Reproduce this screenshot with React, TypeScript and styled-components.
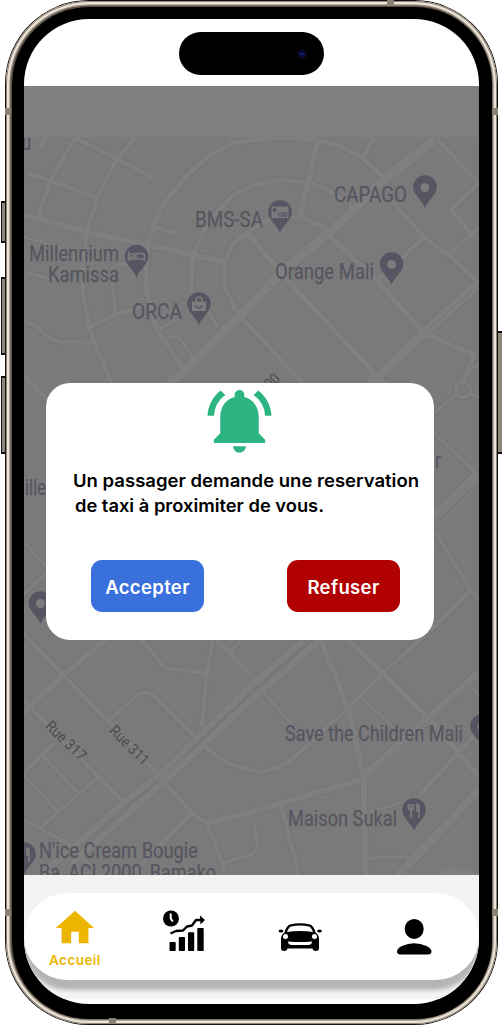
import React from "react";
import styled, { createGlobalStyle } from "styled-components";
import { MdNotificationsActive, MdHome } from "react-icons/md";

const Global = createGlobalStyle`
  html, body { margin: 0; background: #fff; }
  * { box-sizing: border-box; }
`;

const Stage = styled.div`
  position: relative;
  width: 502px;
  height: 1025px;
  padding: 0 4px 0 5px;
  overflow: hidden;
`;

const Phone = styled.div`
  position: relative;
  height: 1025px;
  padding: 1px;
  border-radius: 84px;
  background: #15130f;
`;

const Metal = styled.div`
  height: 100%;
  padding: 5.5px;
  border-radius: 83px;
  background: #b4aa9b;
  box-shadow: inset 0 0 0 1px #8b8375, inset 0 0 0 3.2px #ece4d8, inset 0 0 0 4.4px #a1978a, inset 0 0 0 6px #5a5144;
`;

const Bezel = styled.div`
  height: 100%;
  padding: 12.5px 12.5px 14px;
  border-radius: 77px;
  background: #000;
`;

const Screen = styled.div`
  height: 985px;
  border-radius: 65px;
  overflow: hidden;
  background: #fff;
  display: flex;
  flex-direction: column;
`;

const SideButton = styled.div<{ $top: number; $height: number; $right?: boolean }>`
  position: absolute;
  top: ${(p) => p.$top}px;
  height: ${(p) => p.$height}px;
  width: 5px;
  ${(p) => (p.$right ? "right: 0;" : "left: 1px;")}
  background: #8f8779;
  border: solid #111;
  border-width: ${(p) => (p.$right ? "2px 0 2px 0" : "2px 0 2px 1px")};
`;

const Antenna = styled.div<{ $x: number; $y: number; $w: number; $h: number }>`
  position: absolute;
  left: ${(p) => p.$x}px;
  top: ${(p) => p.$y}px;
  width: ${(p) => p.$w}px;
  height: ${(p) => p.$h}px;
  background: #8a8272;
`;

const StatusBar = styled.header`
  height: 67px;
  padding-top: 13px;
  flex: none;
  display: flex;
  justify-content: center;
`;

const Island = styled.div`
  width: 145px;
  height: 43px;
  border-radius: 22px;
  background: #000;
  display: flex;
  align-items: center;
  justify-content: flex-end;
  padding-right: 17px;
`;

const Camera = styled.div`
  width: 10px;
  height: 10px;
  border-radius: 3px;
  background: radial-gradient(circle at 35% 50%, #23277a 0 0.6px, transparent 1.3px),
    radial-gradient(circle at 65% 50%, #23277a 0 0.6px, transparent 1.3px),
    radial-gradient(circle, #0b0a3c 0 3px, #08060c 4px);
`;

const MapArea = styled.main`
  position: relative;
  height: 789px;
  flex: none;
  padding-top: 51px;
  background: #7f7f7f;
`;

const MapSvg = styled.svg`
  display: block;
  width: 455px;
  height: 738px;
  background: #7a7a7a;
`;

const Dialog = styled.section`
  position: absolute;
  left: 22px;
  top: 297px;
  width: 388px;
  height: 257px;
  border-radius: 24px;
  background: #fff;
  display: flex;
  flex-direction: column;
  align-items: center;
`;

const Bell = styled(MdNotificationsActive)`
  flex: none;
  margin: -1px 1px 1px 0;
  color: #2cb583;
`;

const Message = styled.svg`
  display: block;
  flex: none;
  width: 388px;
  height: 64px;
  font: 600 17.5px Inter, "Liberation Sans", sans-serif;
`;

const Actions = styled.div`
  display: flex;
  gap: 83px;
  margin-top: 36px;
  padding-left: 11px;
`;

const ActionButton = styled.button<{ $color: string }>`
  width: 113px;
  height: 52px;
  padding: 2px 0 0;
  border: 0;
  border-radius: 11px;
  background: ${(p) => p.$color};
  color: #fff;
  font: 600 18.5px Inter, "Liberation Sans", sans-serif;
  letter-spacing: 0.35px;
  white-space: nowrap;
`;

const BottomArea = styled.footer`
  height: 124px;
  flex: none;
  padding-top: 18px;
  background: #f3f3f3;
`;

const Nav = styled.nav`
  height: 87px;
  border-radius: 44px;
  background: #fff;
  box-shadow: 0 10px 4px rgba(0, 0, 0, 0.26);
  display: flex;
  padding-left: 25px;
`;

const NavItem = styled.div<{ $width: number; $top: number }>`
  width: ${(p) => p.$width}px;
  padding-top: ${(p) => p.$top}px;
  display: flex;
  flex-direction: column;
  align-items: flex-start;
  svg { display: block; }
`;

const HomeIcon = styled(MdHome)`
  margin-left: 3px;
  color: #ecb500;
`;

const NavLabel = styled.span`
  font: 600 13.5px/18px Inter, "Liberation Sans", sans-serif;
  color: #ecb500;
  letter-spacing: 0.45px;
`;

const roads: [string, number][] = [
  ["26,172 50,181 95,197", 5],
  ["75,138 62,160 50,181 38,217", 5],
  ["46,137 40,149", 5],
  ["75,138 117,159 153,178", 5],
  ["135,138 117,159 97,197 87,232 83,263 83,293 89,328 110,380 130,420", 5],
  ["24,215 87,232 148,245 193,255 225,262", 6],
  ["384,177 361,157 340,146 318,140 284,137 251,140 233,143 210,155 187,175 160,208 148,243 146,273 147,293 157,330 182,367", 5.5],
  ["155,227 175,233", 5],
  ["351,205 328,190 311,183 279,180 251,186 233,195 207,223 193,255 191,287 195,300", 5],
  ["318,140 308,183 300,215", 6],
  ["250,327 237,313 225,287 225,262 233,243 247,233 268,220 301,217 323,227 329,233", 5],
  ["434,140 384,180 329,233 284,270 240,315 182,373 130,420", 10],
  ["438,140 479,183 451,210 471,233", 5],
  ["449,255 479,227", 5],
  ["391,200 424,237 451,257 479,283", 5],
  ["424,237 378,280", 5],
  ["331,237 378,282 424,333 474,355 464,380", 6],
  ["247,233 289,282 378,377 394,390", 6],
  ["479,283 424,333 374,380 350,405", 10],
  ["244,320 284,363 305,385", 5],
  ["363,157 374,138", 5],
  ["233,143 229,137", 4],
  ["24,237 60,247", 3],
  ["27,273 57,280", 4],
  ["90,327 115,315 145,306", 5],
  ["115,315 112,267 133,262", 4],
  ["27,322 35,325 48,337 60,342 92,343", 5],
  ["157,330 183,317", 4],
  ["163,343 170,337 178,336 193,357", 4],
  ["207,310 218,328", 5],
  ["24,375 50,403", 5],
  ["24,542 50,570 24,594", 4],
  ["18,626 30,640 63,675 110,723 160,777 192,813 207,823 222,863 224,875", 5],
  ["463,383 471,370 479,363", 4],
  ["434,413 457,394", 4],
  ["469,393 479,398", 4],
  ["430,429 473,470 485,480", 4],
  ["434,517 479,473", 10],
  ["436,533 471,590 479,600", 5],
  ["471,590 434,627 383,673 348,708", 5],
  ["120,628 63,675 30,707 24,713", 6],
  ["24,700 30,707 124,803", 5],
  ["304,640 251,686 160,775 123,803 67,853 40,875", 7],
  ["320,640 251,700 166,780 72,863", 7],
  ["110,720 137,695 145,692 153,695 193,735", 5],
  ["138,636 165,668 207,673", 5],
  ["213,640 207,673 202,727", 5],
  ["217,640 251,675", 5],
  ["230,652 242,640", 4],
  ["205,747 227,763 251,770 264,772 288,763 348,708", 5],
  ["207,823 251,812 281,803 364,779", 6],
  ["24,773 55,742", 4],
  ["24,775 58,812", 4],
  ["42,755 78,793", 4],
  ["40,828 98,777", 4],
  ["24,820 67,843 100,875", 4],
  ["192,813 130,875", 5],
  ["222,863 251,855", 4],
  ["321,640 348,708 364,778 365,875", 6],
  ["348,640 383,673 428,718 458,752 479,777", 6],
  ["361,697 394,728", 4],
  ["364,777 479,673", 9],
  ["471,687 479,695", 4],
  ["263,692 309,743", 4],
  ["281,805 299,875", 5],
  ["418,797 479,730", 5],
  ["369,812 401,803", 3],
  ["368,858 409,857", 4],
  ["394,880 479,790", 9],
  ["254,825 258,847 251,856", 4],
];

const medians = ["434,519 479,475", "370,774 479,676", "128,806 251,692 312,640", "424,333 479,285"];

const labels = [
  { t: "CAPAGO", x: 334, y: 201.5, w: 73 },
  { t: "BMS-SA", x: 195, y: 226.5, w: 68 },
  { t: "Millennium", x: 29, y: 260.5, w: 90 },
  { t: "Kamissa", x: 48, y: 282, w: 71 },
  { t: "Orange Mali", x: 275, y: 278.5, w: 99 },
  { t: "ORCA", x: 132, y: 319, w: 50 },
  { t: "ille", x: 25, y: 495, w: 21 },
  { t: "r", x: 435, y: 467.5, w: 6 },
  { t: "Save the Children Mali", x: 285, y: 740.5, w: 178 },
  { t: "Maison Sukal", x: 288, y: 825.5, w: 109 },
  { t: "N'ice Cream Bougie", x: 39, y: 858, w: 159 },
  { t: "Ba, ACI 2000, Bamako", x: 39, y: 879.5, w: 177 },
  { t: "u", x: 22, y: 150, w: 9 },
];

type Kind = "dot" | "bed" | "bag" | "cash" | "food";
const pins: { x: number; y: number; k: Kind }[] = [
  { x: 425, y: 187, k: "dot" },
  { x: 280, y: 212, k: "cash" },
  { x: 136.5, y: 256.5, k: "bed" },
  { x: 391.5, y: 264, k: "dot" },
  { x: 199, y: 304, k: "bag" },
  { x: 40.5, y: 603, k: "dot" },
  { x: 482, y: 726, k: "dot" },
  { x: 414, y: 810, k: "food" },
  { x: 24, y: 854, k: "food" },
];

function Pin({ x, y, k }: { x: number; y: number; k: Kind }) {
  return (
    <g transform={`translate(${x} ${y})`}>
      <path d="M0 21.500C-1.200 14-11.800 8.500-11.800 0A11.800 11.800 0 0 1 11.800 0C11.800 8.500 1.200 14 0 21.500Z" fill="#565562" />
      {k === "dot" && <circle r="4.500" cy="0.500" fill="#7c7c7c" />}
      {k === "cash" && (
        <g>
          <rect x="-8.500" y="-5.500" width="17" height="11.500" rx="1" fill="#7c7c7c" />
          <circle cx="-5.500" cy="-2" r="2" fill="#565562" />
          <text x="-3.500" y="5" fontSize="7" fontFamily="Roboto, sans-serif" fontWeight="700" fill="#565562" textLength="11">100</text>
        </g>
      )}
      {k === "bed" && (
        <g fill="none" stroke="#7c7c7c" strokeWidth="1.600">
          <path d="M-8 -5V4.500M-8 2.500H8V4.500M8 3V-1Q8-3 6-3H-.5V2" />
          <circle cx="-4.500" cy="-.7" r="2" />
        </g>
      )}
      {k === "bag" && (
        <g>
          <path d="M-7 -2.500H7V7H-7Z" fill="#7c7c7c" />
          <path d="M-3 -2V-4A3 3 0 0 1 3-4V-2" fill="none" stroke="#7c7c7c" strokeWidth="1.500" />
          <path d="M-3.500 1.500Q0 6.500 3.500 1.500" fill="none" stroke="#565562" strokeWidth="1.400" />
        </g>
      )}
      {k === "food" && (
        <g fill="none" stroke="#7c7c7c" strokeWidth="1.700">
          <path d="M-5.500-6V-2.500Q-5.500 0-3 0T-.5-2.500V-6M-3-6V8" />
          <path d="M3 1V-6Q5-6 5-3V1ZM5 1V8" fill="#7c7c7c" />
        </g>
      )}
    </g>
  );
}

function CityMap() {
  return (
    <MapSvg viewBox="24 137 455 738">
      <g fill="none" stroke="#747474" strokeLinejoin="round">
        {roads.map(([p, w]) => <polyline key={p} points={p} strokeWidth={w + 1.6} />)}
        <circle cx="463" cy="390" r="7.500" strokeWidth="6" />
      </g>
      <g fill="none" stroke="#7f7f7f" strokeLinejoin="round">
        {roads.map(([p, w]) => <polyline key={p} points={p} strokeWidth={w} />)}
        <circle cx="463" cy="390" r="7.500" strokeWidth="4" />
      </g>
      <ellipse cx="456" cy="880" rx="22" ry="12" fill="#7f7f7f" />
      <g fill="none" stroke="#757575" strokeWidth="1">
        {medians.map((p) => <polyline key={p} points={p} />)}
      </g>
      <g fill="#565660" stroke="#565660" strokeWidth="0.250" fontFamily="Roboto, sans-serif" fontSize="21.500">
        {labels.map((l) => (
          <text key={l.t} x={l.x} y={l.y} textLength={l.w} lengthAdjust="spacingAndGlyphs">{l.t}</text>
        ))}
      </g>
      <g fill="#4b4b4f" fontFamily="Roboto, sans-serif" fontSize="15">
        <text transform="translate(44.500 727) rotate(44)" textLength="50" lengthAdjust="spacingAndGlyphs">Rue 317</text>
        <text transform="translate(108.500 731.500) rotate(45)" textLength="49" lengthAdjust="spacingAndGlyphs">Rue 311</text>
        <text transform="translate(270 390) rotate(-43)" textLength="15" lengthAdjust="spacingAndGlyphs">00</text>
      </g>
      {pins.map((p) => <Pin key={`${p.x}-${p.y}`} {...p} />)}
    </MapSvg>
  );
}

function StatsIcon() {
  return (
    <svg width="44" height="44" viewBox="162 909 44 44">
      <circle cx="171" cy="918.500" r="8" />
      <path d="M170.700 913.500V918.500L172.800 921.500" fill="none" stroke="#fff" strokeWidth="2" />
      <path d="M170.500 933.500L176 931L183 930.500L187 926.500L192 925.500L196 920H201.500" fill="none" stroke="#000" strokeWidth="2.400" strokeLinejoin="round" />
      <path d="M200 915.500L205 920L200.500 924.500Z" />
      <rect x="169.500" y="942" width="6.200" height="9" rx="0.800" />
      <rect x="178.800" y="937" width="6.200" height="14" rx="0.800" />
      <rect x="188" y="932.200" width="6.200" height="18.800" rx="0.800" />
      <rect x="197.300" y="928" width="6.400" height="23" rx="0.800" />
    </svg>
  );
}

function CarIcon() {
  return (
    <svg width="44" height="29" viewBox="278 923 44 29">
      <path fillRule="evenodd" d="M290 924.500Q300 922 310 924.500Q314 926 315.500 932.500Q319 934.500 319 939V948Q319 951 316 951Q313 951 312.500 948.500H287.500Q287 951 284 951Q281 951 281 948V939Q281 934.500 284.500 932.500Q286 926 290 924.500ZM291 926.500Q288.500 927.500 287 932Q300 930 313 932Q311.500 927.500 309 926.500Q300 924.500 291 926.500Z" />
      <ellipse cx="281" cy="931" rx="2.400" ry="1.600" />
      <ellipse cx="319.500" cy="931" rx="2.400" ry="1.600" />
      <circle cx="285.500" cy="936.500" r="2.500" fill="#fff" />
      <circle cx="314.500" cy="936.500" r="2.500" fill="#fff" />
      <path d="M288 941.500Q300 942.500 312 941.500Q312 945 308 945H292Q288 945 288 941.500Z" fill="#fff" />
    </svg>
  );
}

function PersonIcon() {
  return (
    <svg width="36" height="37" viewBox="396 918 36 37">
      <ellipse cx="414.200" cy="928.900" rx="9.500" ry="10" />
      <path d="M397 951.500Q397 948.500 402 946Q408 943.300 414.200 943.300T426.500 946Q431.500 948.500 431.500 951.500Q431.500 954.500 428 954.500H400.500Q397 954.500 397 951.500Z" />
    </svg>
  );
}

export default function App() {
  return (
    <>
      <Global />
      <Stage>
        <SideButton $top={201} $height={42} />
        <SideButton $top={277} $height={78} />
        <SideButton $top={376} $height={78} />
        <SideButton $top={331} $height={123} $right />
        <Phone>
          <Metal>
            <Bezel>
              <Screen>
                <StatusBar>
                  <Island><Camera /></Island>
                </StatusBar>
                <MapArea>
                  <CityMap />
                  <Dialog>
                    <Bell size={77} />
                    <Message>
                      <text x="27" y="26.500" textLength="346" lengthAdjust="spacingAndGlyphs">Un passager demande une reservation</text>
                      <text x="29" y="52" textLength="249" lengthAdjust="spacingAndGlyphs">de taxi à proximiter de vous.</text>
                    </Message>
                    <Actions>
                      <ActionButton $color="#3a70db">Accepter</ActionButton>
                      <ActionButton $color="#b10000">Refuser</ActionButton>
                    </Actions>
                  </Dialog>
                </MapArea>
                <BottomArea>
                  <Nav>
                    <NavItem $width={113} $top={11.5}>
                      <HomeIcon size={46} />
                      <NavLabel>Accueil</NavLabel>
                    </NavItem>
                    <NavItem $width={116} $top={16}><StatsIcon /></NavItem>
                    <NavItem $width={118} $top={30}><CarIcon /></NavItem>
                    <NavItem $width={36} $top={25}><PersonIcon /></NavItem>
                  </Nav>
                </BottomArea>
              </Screen>
            </Bezel>
          </Metal>
          <Antenna $x={0} $y={108} $w={6} $h={7} />
          <Antenna $x={487} $y={108} $w={6} $h={7} />
          <Antenna $x={0} $y={909} $w={6} $h={7} />
          <Antenna $x={487} $y={909} $w={6} $h={7} />
          <Antenna $x={382} $y={0} $w={7} $h={6} />
          <Antenna $x={104} $y={1018} $w={7} $h={6} />
        </Phone>
      </Stage>
    </>
  );
}
